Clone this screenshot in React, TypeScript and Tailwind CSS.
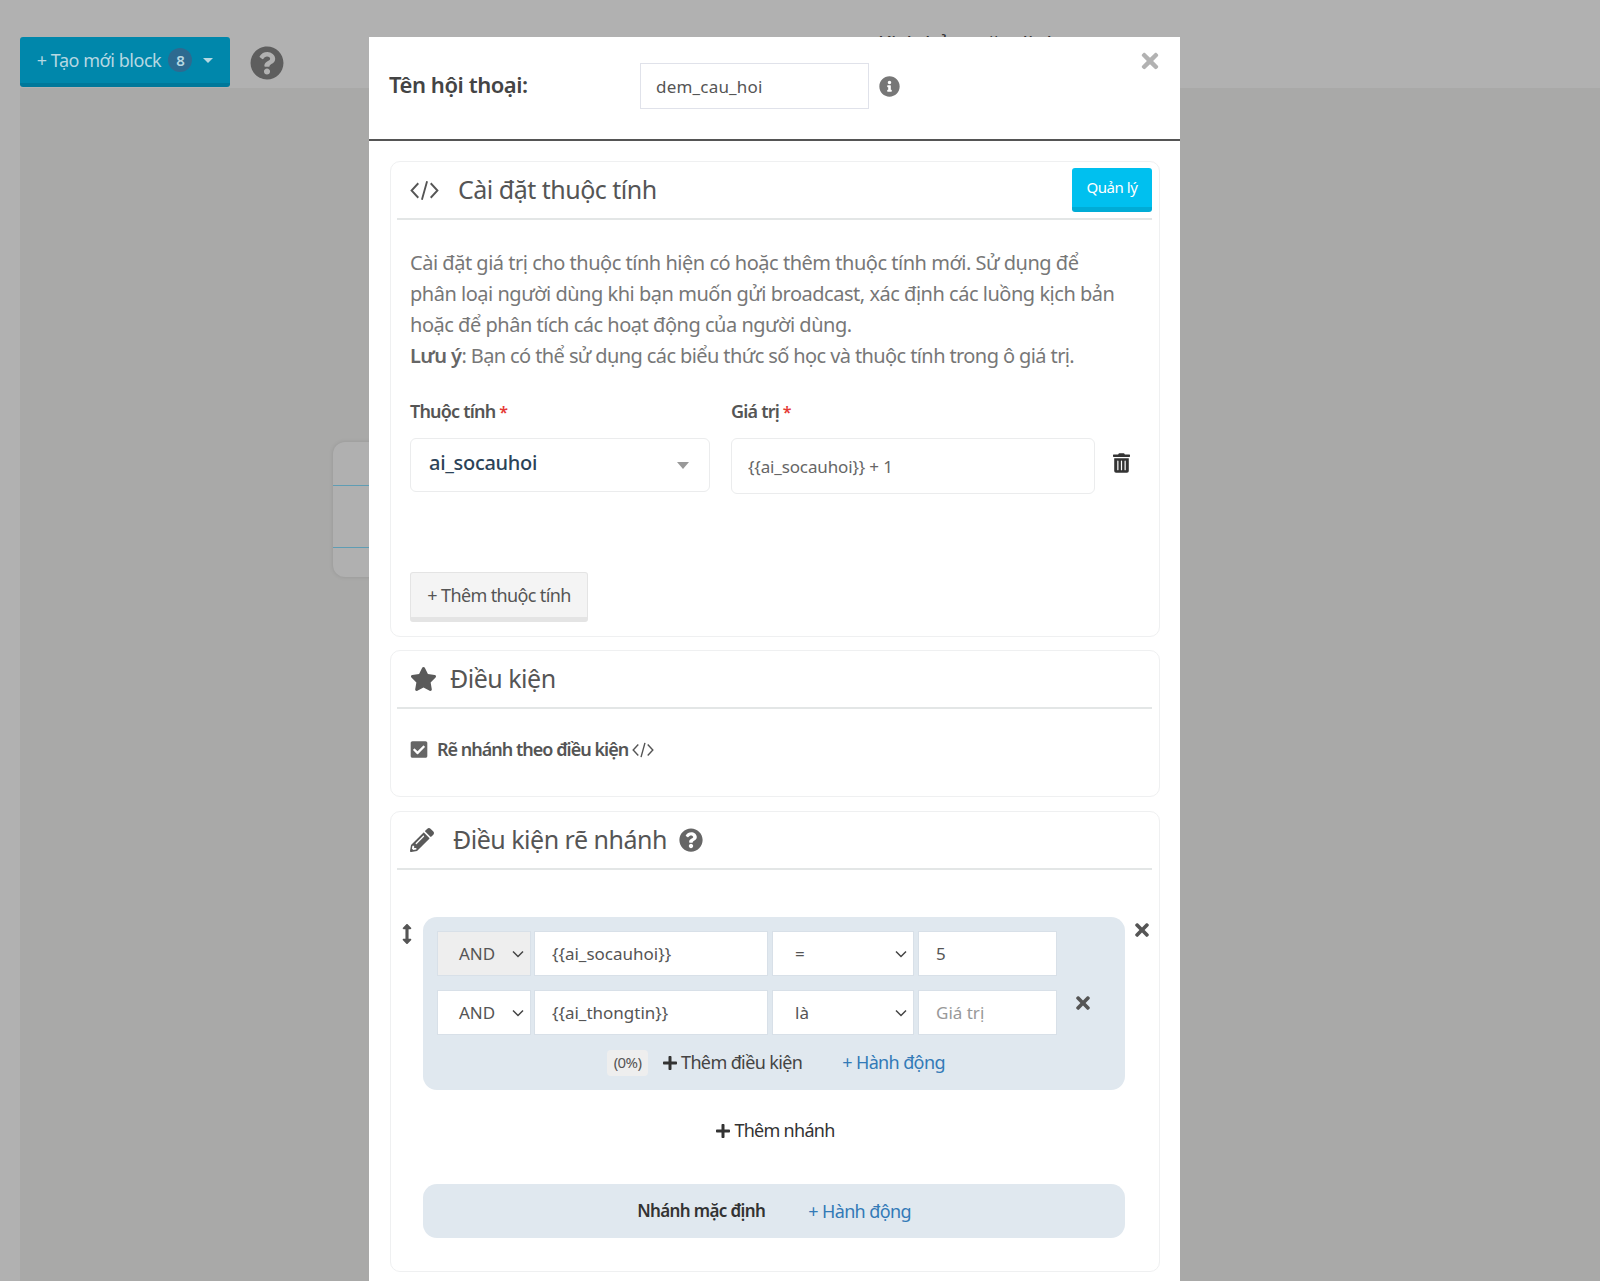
import { FaArrowsAltV, FaCheckSquare, FaInfoCircle, FaPencilAlt, FaPlus, FaQuestionCircle, FaStar, FaTimes, FaTrashAlt } from 'react-icons/fa';

const fieldBox = 'h-[45px] border border-[#d8e0e8] text-[17px] text-[#555] outline-none';

function CodeIcon({ className }: { className: string }) {
  return (
    <svg viewBox="0 0 28 20" fill="none" stroke="currentColor" strokeWidth="1.8" className={className}>
      <path d="M8 3 1.5 10 8 17M20 3l6.500 7L20 17M16.500 1l-5 18" />
    </svg>
  );
}

function Chevron({ className }: { className: string }) {
  return (
    <svg viewBox="0 0 12 8" fill="none" stroke="#444" strokeWidth="1.5" className={className}>
      <path d="M1 1.500 6 6.500l5-5" />
    </svg>
  );
}

function SelectBox({ label, width, shaded, pad }: { label: string; width: string; shaded?: boolean; pad: string }) {
  return (
    <div className={`${fieldBox} ${width} ${pad} ${shaded ? 'bg-[#eee]' : 'bg-white'} flex items-center justify-between pr-[6px]`}>
      <span>{label}</span>
      <Chevron className="h-2 w-3" />
    </div>
  );
}

function CardTitle({ icon, title, gap, children }: { icon: React.ReactNode; title: string; gap: string; children?: React.ReactNode }) {
  return (
    <div className={`ml-[6px] mr-[7px] flex h-[58px] items-center border-b-2 border-[#e3e6e6] pl-[13px] ${gap}`}>
      {icon}
      <h3 className="text-[25px] font-normal tracking-[-0.02em] text-[#555]">{title}</h3>
      {children}
    </div>
  );
}

export default function App() {
  return (
    <div className="relative h-[1281px] w-full overflow-hidden bg-[#a9a9a8] font-['Noto_Sans',sans-serif]">
      <div className="flex h-[88px] items-start bg-[#b1b1b1] pl-5 pt-[37px]">
        <button type="button" className="flex h-[50px] w-[210px] items-center justify-center gap-[7px] rounded-[3px] border-b-4 border-[#00789a] bg-[#0087ab] text-[18px] tracking-[-0.025em] text-[#b6d8e2]">
          + Tạo mới block
          <span className="flex h-6 w-6 items-center justify-center rounded-full bg-[#2d6a90] text-[15px] font-semibold">8</span>
          <span className="ml-[4px] h-0 w-0 border-x-[5px] border-t-[5px] border-x-transparent border-t-[#b6d8e2]" />
        </button>
        <FaQuestionCircle className="ml-[20px] mt-[9px] h-[34px] w-[34px] text-[#5e5e5e]" />
      </div>
      <div className="absolute bottom-0 left-0 top-[88px] w-5 bg-[#b1b1b1]" />

      {/* canvas behind the modal */}
      <div className="absolute left-[333px] top-[442px] h-[135px] w-[60px] rounded-[12px] bg-[#b0b0b0] shadow-[0_0_4px_rgba(0,0,0,0.12)]">
        <div className="mt-[43px] h-px bg-[#5f9db4]" />
        <div className="mt-[61px] h-px bg-[#5f9db4]" />
      </div>
      <div className="absolute left-[878px] top-[29px] text-[21px] text-[#333]">Kịch bản mặc định</div>

      <div className="absolute bottom-0 left-[369px] top-[37px] w-[811px] bg-white">
        <div className="relative flex h-[104px] items-center border-b-2 border-[#555] pb-[4px] pl-[20px]">
          <label className="mb-[3px] w-[251px] text-[22px] font-semibold tracking-[-0.02em] text-[#444]">Tên hội thoại:</label>
          <input
            readOnly
            value="dem_cau_hoi"
            className="h-[46px] w-[229px] border border-[#e0e2ea] pl-[15px] text-[17px] tracking-[0.012em] text-[#555] outline-none"
          />
          <FaInfoCircle className="ml-[10px] h-[21px] w-[21px] text-[#777]" />
          <FaTimes className="absolute right-[18px] top-[12px] h-[24px] w-[24px] text-[#b2b2b2]" />
        </div>

        <section className="ml-[21px] mr-[20px] mt-[20px] h-[476px] rounded-[10px] border border-[#eff0f1]">
          <div className="relative">
            <CardTitle icon={<CodeIcon className="h-[21px] w-[29px] text-[#555]" />} title="Cài đặt thuộc tính" gap="gap-[19px]" />
            <button type="button" className="absolute right-[7px] top-[6px] h-[44px] w-[80px] rounded-[3px] border-b-[5px] border-[#00acd6] bg-[#00c0ef] text-[15px] tracking-[-0.03em] text-white">
              Quản lý
            </button>
          </div>
          <p className="mt-[27px] px-[19px] text-[20px] leading-[31px] tracking-[-0.024em] text-[#777]">
            Cài đặt giá trị cho thuộc tính hiện có hoặc thêm thuộc tính mới. Sử dụng để
            <br />
            phân loại người dùng khi bạn muốn gửi broadcast, xác định các luồng kịch bản
            <br />
            hoặc để phân tích các hoạt động của người dùng.
            <br />
            <span className="tracking-[-0.03em]">
              <b className="font-semibold text-[#666]">Lưu ý</b>: Bạn có thể sử dụng các biểu thức số học và thuộc tính trong ô giá trị.
            </span>
          </p>
          <div className="mt-[27px] flex px-[19px]">
            <div className="w-[300px]">
              <div className="text-[18px] font-semibold tracking-[-0.045em] text-[#555]">
                Thuộc tính <span className="text-[16px] text-[#e53935]">*</span>
              </div>
              <div className="mt-[13px] flex h-[54px] items-center justify-between rounded-[6px] border border-[#ebeced] pb-[4px] pl-[18px] pr-[20px]">
                <span className="text-[20px] font-medium tracking-[-0.015em] text-[#2c4358]">ai_socauhoi</span>
                <span className="mt-[5px] h-0 w-0 border-x-[6px] border-t-[7px] border-x-transparent border-t-[#999]" />
              </div>
            </div>
            <div className="ml-[21px] w-[364px]">
              <div className="text-[18px] font-semibold tracking-[-0.045em] text-[#555]">
                Giá trị <span className="text-[16px] text-[#e53935]">*</span>
              </div>
              <input
                readOnly
                value="{{ai_socauhoi}} + 1"
                className="mt-[13px] h-[56px] w-full rounded-[6px] border border-[#ebeced] px-4 text-[17px] tracking-[-0.008em] text-[#666] outline-none"
              />
            </div>
            <FaTrashAlt className="ml-[18px] mt-[55px] h-[20px] w-[17px] text-[#333]" />
          </div>
          <button type="button" className="ml-[19px] mt-[78px] h-[50px] w-[178px] rounded-[3px] border border-b-[5px] border-[#e4e4e4] bg-[#f4f4f4] text-[18px] tracking-[-0.035em] text-[#555]">
            + Thêm thuộc tính
          </button>
        </section>

        <section className="ml-[21px] mr-[20px] mt-[13px] h-[147px] rounded-[10px] border border-[#eff0f1]">
          <CardTitle icon={<FaStar className="h-[26px] w-[27px] text-[#5a5a5a]" />} title="Điều kiện" gap="gap-[13px]" />
          <div className="mt-[27px] flex items-center pl-[19px]">
            <FaCheckSquare className="h-[19px] w-[18px] text-[#666]" />
            <span className="ml-[9px] text-[18px] font-semibold tracking-[-0.055em] text-[#555]">Rẽ nhánh theo điều kiện</span>
            <CodeIcon className="ml-[4px] h-[16px] w-[22px] text-[#555]" />
          </div>
        </section>

        <section className="relative ml-[21px] mr-[20px] mt-[14px] h-[461px] rounded-[10px] border border-[#eff0f1]">
          <CardTitle icon={<FaPencilAlt className="h-[24px] w-[24px] text-[#5a5a5a]" />} title="Điều kiện rẽ nhánh" gap="gap-[19px]">
            <FaQuestionCircle className="ml-[-7px] h-[24px] w-[24px] text-[#666]" />
          </CardTitle>
          <FaArrowsAltV className="absolute left-[11px] top-[112px] h-[20px] w-[10px] text-[#555]" />
          <FaTimes className="absolute left-[741px] top-[108px] h-[20px] w-[20px] text-[#555]" />

          <div className="relative ml-[32px] mt-[47px] h-[173px] w-[702px] rounded-[14px] bg-[#e0e8ef] pl-[14px] pt-[14px]">
            <div className="flex h-[45px]">
              <SelectBox label="AND" width="w-[94px]" pad="pl-[21px]" shaded />
              <input readOnly value="{{ai_socauhoi}}" className={`${fieldBox} ml-[3px] w-[234px] bg-white px-[17px]`} />
              <SelectBox label="=" width="w-[142px] ml-[4px]" pad="pl-[22px]" />
              <input readOnly value="5" className={`${fieldBox} ml-[4px] w-[139px] bg-white px-[17px]`} />
            </div>
            <div className="mt-[14px] flex h-[45px]">
              <SelectBox label="AND" width="w-[94px]" pad="pl-[21px]" />
              <input readOnly value="{{ai_thongtin}}" className={`${fieldBox} ml-[3px] w-[234px] bg-white px-[17px]`} />
              <SelectBox label="là" width="w-[142px] ml-[4px]" pad="pl-[22px]" />
              <input readOnly placeholder="Giá trị" className={`${fieldBox} ml-[4px] w-[139px] bg-white px-[17px] placeholder:text-[#999]`} />
            </div>
            <FaTimes className="absolute left-[650px] top-[76px] h-[20px] w-[20px] text-[#555]" />
            <div className="mt-[14px] flex items-center pl-[170px] text-[18px] tracking-[-0.035em]">
              <span className="flex h-[26px] w-[41px] items-center justify-center rounded-[4px] bg-[#eee] text-[15px] text-[#555]">(0%)</span>
              <FaPlus className="ml-[14px] h-[16px] w-[16px] text-[#333]" />
              <span className="ml-[3px] text-[#444]">Thêm điều kiện</span>
              <span className="ml-[40px] text-[#337ab7]">+ Hành động</span>
            </div>
          </div>

          <div className="mt-[27px] flex items-center justify-center text-[18px] tracking-[-0.04em] text-[#333]">
            <FaPlus className="mr-[3px] h-[16px] w-[16px] text-[#333]" />
            Thêm nhánh
          </div>

          <div className="ml-[32px] mt-[40px] flex h-[54px] w-[702px] items-center justify-center rounded-[14px] bg-[#e0e8ef] text-[18px] tracking-[-0.035em]">
            <b className="text-[17px] font-semibold text-[#333]">Nhánh mặc định</b>
            <span className="ml-[43px] text-[#337ab7]">+ Hành động</span>
          </div>
        </section>
      </div>
    </div>
  );
}
